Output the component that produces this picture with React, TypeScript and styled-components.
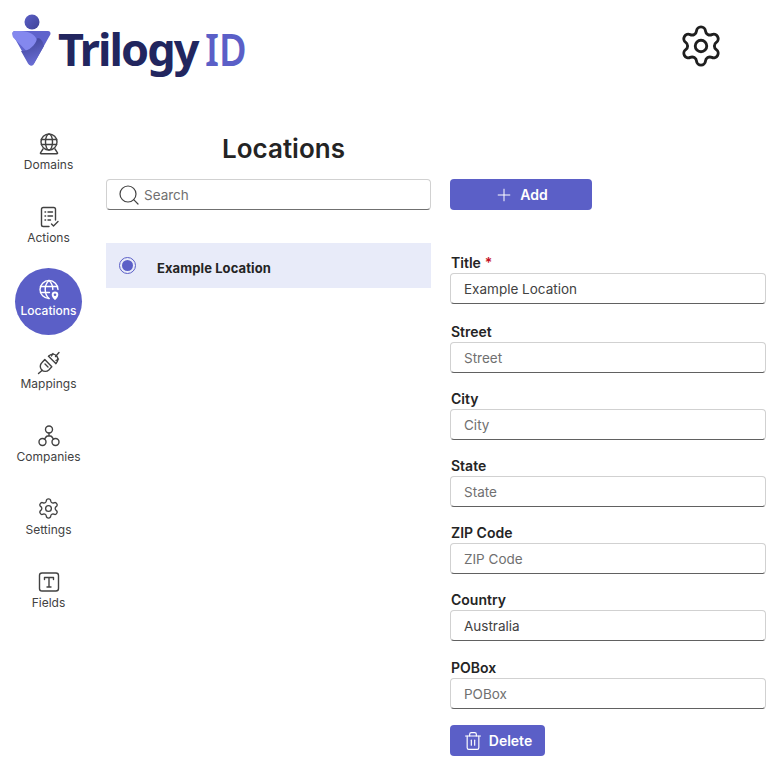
import React from 'react';
import styled, { createGlobalStyle } from 'styled-components';
import { Settings, Search, Plus, Trash2 } from 'lucide-react';

const GlobalStyle = createGlobalStyle`
  html, body {
    margin: 0;
    padding: 0;
    background: #ffffff;
    font-family: Inter, "Liberation Sans", sans-serif;
    color: #242424;
  }
  * { box-sizing: border-box; }
`;

const Page = styled.div`
  width: 771px;
  height: 768px;
  overflow: hidden;
`;

const Header = styled.header`
  height: 122px;
  display: flex;
  justify-content: space-between;
  padding: 13px 47px 0 11px;
  align-items: flex-start;
`;

const Logo = styled.div`
  display: flex;
  align-items: flex-start;
`;

const LogoWord = styled.div`
  font-family: "Noto Sans", sans-serif;
  font-size: 45px;
  line-height: 64px;
  font-weight: 700;
  letter-spacing: -1.900px;
  color: #22265f;
  margin-left: 5px;
  margin-top: 4px;
  white-space: nowrap;
`;

const LogoAccent = styled.span`
  display: inline-block;
  color: #5b5fc7;
  margin-left: 7px;
  font-weight: 600;
  letter-spacing: 0;
  transform: scaleX(0.84);
  transform-origin: left center;
`;

const GearButton = styled.div`
  margin-top: 10px;
  color: #1f1f1f;
  display: flex;
`;

const Body = styled.div`
  display: flex;
`;

const Sidebar = styled.nav`
  width: 97px;
  margin-right: 9px;
  display: flex;
  flex-direction: column;
  align-items: center;
  gap: 6px;
`;

const NavItem = styled.div<{ $active?: boolean }>`
  width: 67px;
  height: 67px;
  border-radius: 50%;
  display: flex;
  flex-direction: column;
  align-items: center;
  padding-top: 10px;
  font-size: 12px;
  line-height: 20px;
  color: ${(p) => (p.$active ? '#ffffff' : '#424242')};
  background: ${(p) => (p.$active ? '#5b5fc7' : 'transparent')};
  font-weight: ${(p) => (p.$active ? 500 : 400)};
  white-space: nowrap;
`;

const NavIcon = styled.span`
  height: 23px;
  display: flex;
  align-items: center;
  justify-content: center;

  svg {
    flex-shrink: 0;
  }
`;

const Columns = styled.div`
  display: grid;
  grid-template-columns: 325px 316px;
  column-gap: 19px;
`;

const ListColumn = styled.section``;

const Title = styled.h1`
  margin: 0;
  height: 57px;
  padding: 10px 0 0 30px;
  font-size: 26px;
  line-height: 34px;
  font-weight: 600;
  text-align: center;
  color: #242424;
`;

const SearchBox = styled.div`
  height: 31px;
  border: 1px solid #d1d1d1;
  border-bottom: 1px solid #707070;
  border-radius: 4px;
  display: flex;
  align-items: center;
  gap: 3px;
  padding: 0 10px;
  font-size: 13.500px;
  color: #707070;

  svg {
    color: #424242;
  }
`;

const ListRow = styled.div`
  margin-top: 33px;
  height: 45px;
  background: #e8ebf9;
  display: flex;
  align-items: center;
  padding: 5px 0 0 13px;
  font-size: 13px;
  font-weight: 700;
  letter-spacing: 0.1px;
  color: #242424;
`;

const Radio = styled.span`
  width: 17px;
  height: 17px;
  border: 1px solid #5b5fc7;
  border-radius: 50%;
  display: flex;
  align-items: center;
  justify-content: center;
  margin: -6px 21px 0 0;

  &::after {
    content: '';
    width: 11px;
    height: 11px;
    border-radius: 50%;
    background: #5b5fc7;
  }
`;

const FormColumn = styled.section`
  padding-top: 57px;
`;

const PrimaryButton = styled.button<{ $width: number }>`
  width: ${(p) => p.$width}px;
  height: 31px;
  border: none;
  border-radius: 4px;
  background: #5b5fc7;
  color: #ffffff;
  display: flex;
  align-items: center;
  justify-content: center;
  gap: 6px;
  font-family: inherit;
  font-size: 14px;
  font-weight: 600;
  padding: 0;
`;

const Form = styled.div`
  margin-top: 44px;
  display: flex;
  flex-direction: column;
  gap: 17px;
`;

const Field = styled.div`
  display: flex;
  flex-direction: column;
  gap: 1px;

  &:first-child {
    margin-bottom: 2px;
  }

  &:nth-child(6) {
    margin-bottom: 1px;
  }

  &:nth-child(7) {
    margin-bottom: -1px;
  }
`;

const Label = styled.label`
  font-size: 14px;
  line-height: 18px;
  font-weight: 600;
  padding-left: 1px;
  color: #242424;
`;

const Required = styled.span`
  color: #c50f1f;
  margin-left: 4px;
`;

const TextInput = styled.input`
  width: 100%;
  height: 31px;
  border: 1px solid #d1d1d1;
  border-bottom: 1px solid #616161;
  border-radius: 4px;
  padding: 0 13px;
  font-family: inherit;
  font-size: 13.500px;
  color: #424242;
  background: #ffffff;
  outline: none;

  &::placeholder {
    color: #707070;
    opacity: 1;
  }
`;

const Icon = ({ children }: { children: React.ReactNode }) => (
  <svg width="24" height="24" viewBox="0 0 24 24" fill="none" stroke="currentColor" strokeWidth="1.4" strokeLinecap="round" strokeLinejoin="round">
    {children}
  </svg>
);

const DomainsIcon = () => (
  <Icon>
    <circle cx="12" cy="10" r="8" />
    <ellipse cx="12" cy="10" rx="3.500" ry="8" />
    <path d="M4.400 7.500h15.200M4.400 12.500h15.200" />
    <path d="M6 17 3.500 20.800c-.3.500 0 1 .6 1h15.800c.6 0 .9-.5.6-1L18 17" />
  </Icon>
);

const ActionsIcon = () => (
  <Icon>
    <path d="M12 21.500H6.300c-1 0-1.800-.8-1.800-1.800V4.300c0-1 .8-1.800 1.800-1.800h10.400c1 0 1.800.8 1.800 1.800V15" />
    <path d="M8 7h.6M8 11h.6M8 15h.6M11 7h4.500M11 11h4.500M11 15h2.500" />
    <path d="m14.500 19 2 2 4.500-4.500" />
  </Icon>
);

const LocationsIcon = () => (
  <Icon>
    <path d="M12 20.500a9 9 0 1 1 9-9" />
    <path d="M12 20.500c-2.300-2-3.800-5.200-3.800-9s1.500-7 3.800-9c2.300 2 3.800 5.200 3.800 9" />
    <path d="M3.500 8.500h17M3.500 14.500h9" />
    <path d="M18 23s-4-3.300-4-6.300a4 4 0 0 1 8 0c0 3-4 6.300-4 6.300z" fill="currentColor" stroke="#5b5fc7" />
    <circle cx="18" cy="16.700" r="1.300" fill="#5b5fc7" stroke="none" />
  </Icon>
);

const MappingsIcon = () => (
  <Icon>
    <path d="m1.500 22.500 3.800-3.300M18.500 5.500l3.500-4" />
    <path d="M7.800 8.500 4.800 11.800a5 5 0 0 0 7 7.200l3-3.200z" />
    <path d="m8 13 3 3M11.500 5.200 18.800 12.500" />
    <path d="M11.500 5.200 13.500 3.800a5 5 0 0 1 6.700 6.800l-1.400 1.900" />
    <path d="M16 2.500 14.500 5M21.500 8l-2.500 1.500" />
  </Icon>
);

const CompaniesIcon = () => (
  <Icon>
    <circle cx="12" cy="5.500" r="3.500" />
    <circle cx="5.500" cy="18" r="3.500" />
    <circle cx="18.500" cy="18" r="3.500" />
    <path d="M12 9v3M7.500 15.200 9 13c.4-.6 1-1 1.800-1h2.400c.8 0 1.400.4 1.800 1l1.500 2.200" />
  </Icon>
);

const FieldsIcon = () => (
  <Icon>
    <rect x="2.500" y="3" width="19" height="18" rx="2.500" />
    <path d="M7.500 9.500v-2h9v2M12 7.500v9.500M10 17h4" />
  </Icon>
);

const LogoMark = () => (
  <svg width="42" height="56" viewBox="0 0 42 56">
    <defs>
      <linearGradient id="logoHead" x1="0" y1="0" x2="1" y2="1">
        <stop offset="0" stopColor="#5b5fc7" />
        <stop offset="1" stopColor="#3f4396" />
      </linearGradient>
      <linearGradient id="logoBottom" x1="0.200" y1="0" x2="0.500" y2="1">
        <stop offset="0" stopColor="#3f4396" />
        <stop offset="1" stopColor="#6a6ed6" />
      </linearGradient>
    </defs>
    <circle cx="21" cy="9" r="7.500" fill="url(#logoHead)" />
    <path d="M4 20.500h33L20.500 50z" fill="#5f63cc" stroke="#5f63cc" strokeWidth="5" strokeLinejoin="round" />
    <path d="M4 18c9-.5 18 1 21 7 2.500 6-2 12-8 14.500L2.200 24.500C0.500 21 1.500 18 4 18z" fill="#8488ee" />
    <path d="M26.500 25c3 0 5.500 3 6.500 8L23 50.500c-1.500 2.500-4.500 2.500-6 0L10 38c7 1 14-5 16.500-13z" fill="url(#logoBottom)" />
  </svg>
);

const navItems = [
  { label: 'Domains', icon: <DomainsIcon /> },
  { label: 'Actions', icon: <ActionsIcon /> },
  { label: 'Locations', icon: <LocationsIcon />, active: true },
  { label: 'Mappings', icon: <MappingsIcon /> },
  { label: 'Companies', icon: <CompaniesIcon /> },
  { label: 'Settings', icon: <Settings size={23} strokeWidth={1.4} /> },
  { label: 'Fields', icon: <FieldsIcon /> },
];

const fields = [
  { label: 'Title', value: 'Example Location', required: true },
  { label: 'Street' },
  { label: 'City' },
  { label: 'State' },
  { label: 'ZIP Code' },
  { label: 'Country', value: 'Australia' },
  { label: 'POBox' },
];

export default function App() {
  return (
    <Page>
      <GlobalStyle />
      <Header>
        <Logo>
          <LogoMark />
          <LogoWord>
            Trilogy<LogoAccent>ID</LogoAccent>
          </LogoWord>
        </Logo>
        <GearButton>
          <Settings size={46} strokeWidth={1.5} />
        </GearButton>
      </Header>
      <Body>
        <Sidebar>
          {navItems.map((item) => (
            <NavItem key={item.label} $active={item.active}>
              <NavIcon>{item.icon}</NavIcon>
              {item.label}
            </NavItem>
          ))}
        </Sidebar>
        <Columns>
          <ListColumn>
            <Title>Locations</Title>
            <SearchBox>
              <Search size={24} strokeWidth={1.2} />
              Search
            </SearchBox>
            <ListRow>
              <Radio />
              Example Location
            </ListRow>
          </ListColumn>
          <FormColumn>
            <PrimaryButton $width={142}>
              <Plus size={20} strokeWidth={1.2} />
              Add
            </PrimaryButton>
            <Form>
              {fields.map((field) => (
                <Field key={field.label}>
                  <Label>
                    {field.label}
                    {field.required && <Required>*</Required>}
                  </Label>
                  <TextInput placeholder={field.label} defaultValue={field.value} />
                </Field>
              ))}
              <PrimaryButton $width={95}>
                <Trash2 size={20} strokeWidth={1.4} />
                Delete
              </PrimaryButton>
            </Form>
          </FormColumn>
        </Columns>
      </Body>
    </Page>
  );
}
